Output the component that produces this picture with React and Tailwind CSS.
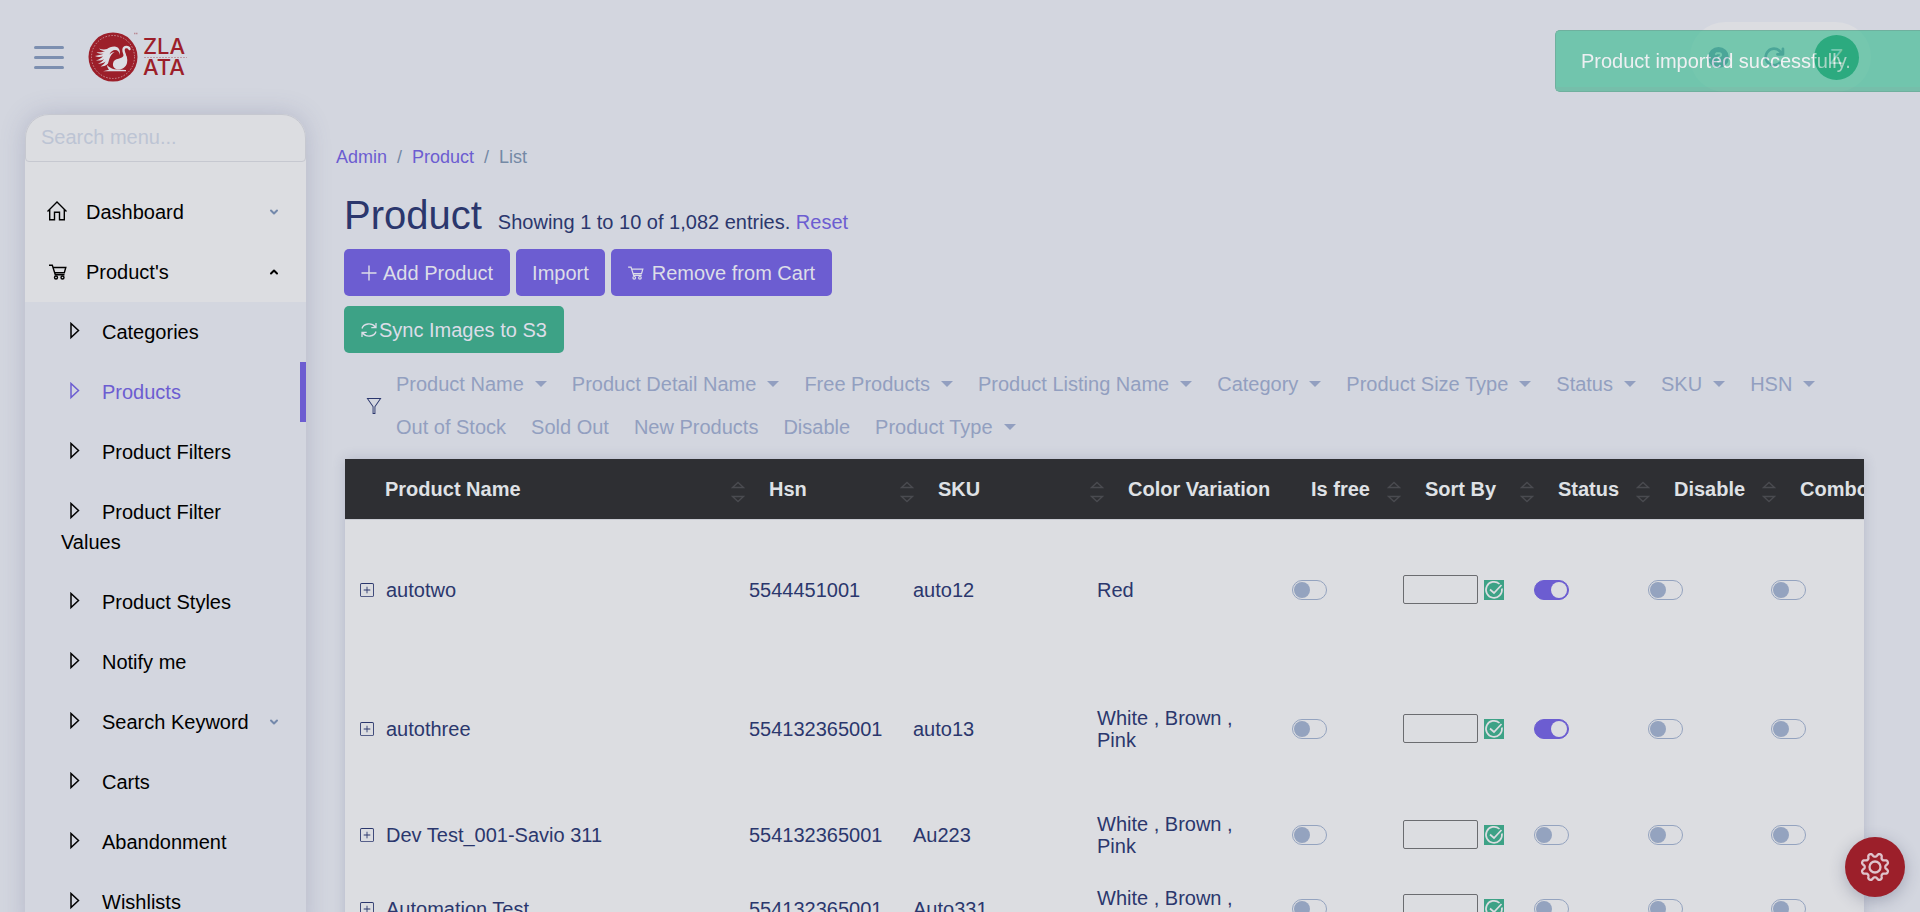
import React from "react";
import { TfiFilter } from "react-icons/tfi";
import { BsPlusSquare } from "react-icons/bs";
import { FaCircleQuestion, FaArrowRotateRight } from "react-icons/fa6";
import { ChevronDown, ChevronUp } from "lucide-react";

const subItems = [
  { label: "Categories" },
  { label: "Products", active: true },
  { label: "Product Filters" },
  { label: "Product Filter Values" },
  { label: "Product Styles" },
  { label: "Notify me" },
  { label: "Search Keyword", more: true },
  { label: "Carts" },
  { label: "Abandonment" },
  { label: "Wishlists" },
];

const filters = [
  ["Product Name", true],
  ["Product Detail Name", true],
  ["Free Products", true],
  ["Product Listing Name", true],
  ["Category", true],
  ["Product Size Type", true],
  ["Status", true],
  ["SKU", true],
  ["HSN", true],
  ["Out of Stock", false],
  ["Sold Out", false],
  ["New Products", false],
  ["Disable", false],
  ["Product Type", true],
];

const headCols = [
  ["Product Name", true],
  ["Hsn", true],
  ["SKU", true],
  ["Color Variation", false],
  ["Is free", true],
  ["Sort By", true],
  ["Status", true],
  ["Disable", true],
  ["Combo", true],
];

const rows = [
  { name: "autotwo", hsn: "5544451001", sku: "auto12", color: "Red", status: true, height: "h-[140px]" },
  { name: "autothree", hsn: "554132365001", sku: "auto13", color: "White , Brown , Pink", status: true, height: "h-[138px]" },
  { name: "Dev Test_001-Savio 311", hsn: "554132365001", sku: "Au223", color: "White , Brown , Pink", status: false, height: "h-[74px]" },
  { name: "Automation Test", hsn: "554132365001", sku: "Auto331", color: "White , Brown , Pink", status: false, height: "h-[74px]" },
];

function Logo() {
  return (
    <svg width="102" height="54" viewBox="0 0 102 54" role="img" aria-label="Zlaata">
      <circle cx="25" cy="27" r="24.500" fill="#9c1f2a" />
      <circle cx="25" cy="27" r="21.500" fill="none" stroke="#cfa8af" strokeWidth="0.800" strokeDasharray="1.500 1.500" />
      <path
        fill="none"
        stroke="#dcdde4"
        strokeWidth="2.400"
        strokeLinecap="round"
        d="M41.500 19c-.8-2.500-5.500-3-6 .5-.3 3 2.500 6 2 11"
      />
      <path fill="#dcdde4" d="M36.500 22c2 3.500 3.500 7 2.500 11-1 4-4.500 6.500-8.500 6.500-3.500 0-6-2.500-5.500-6 .4-3 2.500-4 5.500-4.700 4-1 6-3 6-6.800z" />
      <path
        fill="#dcdde4"
        d="M32 25c.5-5-1.500-8.500-5.500-8.500-3.500 0-5.500 1-7.500 2.500-3 .8-5.500.3-8-.5 1.500 2 4 2.500 6 2.500-3 1.500-5.500 1.500-8.500 1 2 1.800 4.500 2 7 1.800C13 25 10 25.500 7 26c2.500 1.500 5.500 1 8 .5-2 2-4 3-7 3.800 3 .8 6 0 8-1.300-1.500 2-3 3.500-6 4.700 3 .3 5.500-.7 7.500-2.200-1 2-2.500 3.500-5 5 3.500 0 6-1 7.500-3l1.500-5c1-3 2.500-5 5-6.500-2 0-3.500 1-5 2.500 1-3 3.500-4.500 5.500-4.500 3 0 4.500 2 5 5z"
      />
      <path fill="#dcdde4" d="M19 35c2 2 4 3.500 7 4.200l12 .8v1.200H15l6-1.500c-1-1.200-1.800-2.700-2-4.700z" />
      <text x="55" y="24" fontSize="22" fontWeight="500" fill="#9c1f2a" fontFamily="Inter, sans-serif">ZLA</text>
      <text x="55" y="45" fontSize="22" fontWeight="500" fill="#9c1f2a" fontFamily="Inter, sans-serif">ATA</text>
      <path d="M56 27.500h43" stroke="#b98b95" strokeWidth="0.800" strokeDasharray="2 1" />
      <path d="M46 3.500h4" stroke="#b98b95" strokeWidth="1.500" strokeDasharray="1.500 0.500" />
    </svg>
  );
}

const gearPath = (() => {
  const points = [];
  for (let i = 0; i < 144; i += 1) {
    const angle = (i / 144) * Math.PI * 2;
    const wave = Math.tanh(-1.6 * Math.cos(8 * angle)) / Math.tanh(1.6);
    const radius = 12 + 1.7 * wave;
    points.push(`${(16 + radius * Math.cos(angle)).toFixed(2)} ${(16 + radius * Math.sin(angle)).toFixed(2)}`);
  }
  return `M${points.join("L")}Z`;
})();

function Gear() {
  return (
    <svg width="32" height="32" viewBox="0 0 32 32" fill="none" stroke="#dfc3cb" strokeWidth="2.300" strokeLinejoin="round" aria-hidden="true">
      <path d={gearPath} />
      <circle cx="16" cy="16" r="5.500" />
    </svg>
  );
}

function HomeIcon() {
  return (
    <svg width="20" height="22" viewBox="0 0 20 22" fill="none" stroke="currentColor" strokeWidth="1.400" aria-hidden="true">
      <path d="M.5 10.500 10 1l9.500 9.500M2.700 8.500v10.300h4.800v-7.500h5v7.500h4.800V8.500" />
    </svg>
  );
}

function CartIcon({ className }) {
  return (
    <svg viewBox="0 0 18 16" fill="none" stroke="currentColor" strokeWidth="1.400" className={className} aria-hidden="true">
      <path d="M0 1.200h3.300l3 9.600h9.200M4.200 3.500h12.600l-1.500 5.300H6" />
      <circle cx="7" cy="13.500" r="1.500" />
      <circle cx="13.500" cy="13.500" r="1.500" />
    </svg>
  );
}

function ReloadIcon() {
  return (
    <svg width="16" height="16" viewBox="0 0 16 16" fill="none" stroke="currentColor" strokeWidth="1.300" aria-hidden="true">
      <path d="M1 6.500C2.500 1 11 .5 14.300 5M15 1v4.700h-4.700M15 9.500c-1.500 5.500-10 6-13.300 1.500M1 15v-4.700h4.700" />
    </svg>
  );
}

function PlusIcon() {
  return (
    <svg width="16" height="16" viewBox="0 0 16 16" stroke="currentColor" strokeWidth="1.400" aria-hidden="true">
      <path d="M8 .5v15M.5 8h15" />
    </svg>
  );
}

function PlayIcon() {
  return (
    <svg width="10" height="18" viewBox="0 0 10 18" fill="none" stroke="currentColor" strokeWidth="1.500" className="mr-[22px] ml-[9px] inline align-[-1px]" aria-hidden="true">
      <path d="M1 1.500v14l7.500-7z" />
    </svg>
  );
}

function CheckIcon() {
  return (
    <svg width="20" height="20" viewBox="0 0 20 20" fill="none" stroke="currentColor" strokeWidth="1.700" aria-hidden="true">
      <path d="M15.500 4A8 8 0 1 0 17.900 8.500M6 9.500l4 3.500 7.500-8" />
    </svg>
  );
}

function Caret() {
  return (
    <svg width="12" height="6" viewBox="0 0 12 6" fill="currentColor" aria-hidden="true">
      <path d="M0 0h12L6 6z" />
    </svg>
  );
}

function SortIcon() {
  return (
    <svg width="14" height="22" viewBox="0 0 14 22" fill="none" stroke="#4a4b50" strokeWidth="1.300" className="mt-[5px]" aria-hidden="true">
      <path d="M1.500 6.500h11L7 1.500zM1.500 15.500h11L7 20.500z" />
    </svg>
  );
}

function Toggle({ label, checked }) {
  return (
    <input
      type="checkbox"
      role="switch"
      aria-label={label}
      defaultChecked={checked}
      className="block h-5 w-[35px] appearance-none rounded-full border border-[#94a3bf] before:mt-[1px] before:ml-[1px] before:block before:size-4 before:rounded-full before:bg-[#94a3bf] checked:border-[#6c5dd1] checked:bg-[#6c5dd1] checked:before:ml-4 checked:before:bg-[#dcdde1]"
    />
  );
}

function Sidebar() {
  return (
    <aside className="w-[281px] shrink-0 self-start rounded-t-[24px] bg-[#dcdde1] shadow-[0_0_24px_rgba(90,95,140,0.25)]">
      <input
        type="search"
        aria-label="Search menu"
        placeholder="Search menu..."
        className="block h-12 w-full rounded-t-[24px] rounded-b-[4px] border border-[#c6c8d0] px-[15px] pb-[2px] text-[20px] outline-none placeholder:text-[#bcc4d4]"
      />
      <nav className="mt-5 text-black">
        <a href="#dashboard" className="flex h-[60px] items-center pr-[26px] pl-[22px]">
          <HomeIcon />
          <span className="flex-1 pl-[19px]">Dashboard</span>
          <ChevronDown className="size-[12px] text-[#7489ab]" strokeWidth={4} />
        </a>
        <a href="#products" className="flex h-[60px] items-center pr-[26px] pl-6">
          <CartIcon className="h-4 w-[18px]" />
          <span className="flex-1 pl-[19px]">Product's</span>
          <ChevronUp className="size-[12px]" strokeWidth={4} />
        </a>
        <ul className="bg-[#d3d6df]">
          {subItems.map((item) => (
            <li key={item.label}>
              <a
                href={`#${item.label.toLowerCase().replaceAll(" ", "-")}`}
                className={`flex items-center border-r-[6px] py-[15px] pr-5 pl-9 ${item.active ? "border-[#6c5dd1] text-[#6c5dd1]" : "border-transparent"}`}
              >
                <span className="flex-1 leading-[30px]">
                  <PlayIcon />
                  {item.label}
                </span>
                {item.more && <ChevronDown className="size-[12px] text-[#7489ab]" strokeWidth={4} />}
              </a>
            </li>
          ))}
        </ul>
      </nav>
    </aside>
  );
}

function ProductTable() {
  return (
    <section className="mt-[17px] ml-[9px] shadow-[0_0_12px_rgba(60,70,110,0.2)]">
      <div className="overflow-x-auto bg-[#dcdde1] [scrollbar-width:none]">
        <table className="w-[1584px] table-fixed border-collapse bg-[#2e2f33] text-left text-[#dfe1e5]">
          <colgroup>
            <col className="w-[408px]" />
            <col className="w-[169px]" />
            <col className="w-[190px]" />
            <col className="w-[183px]" />
            <col className="w-[114px]" />
            <col className="w-[133px]" />
            <col className="w-[116px]" />
            <col className="w-[126px]" />
            <col />
          </colgroup>
          <thead>
            <tr>
              {headCols.map(([label, sortable]) => (
                <th key={label} className="h-[60px] pr-2 pl-4 first:pl-10">
                  <div className="flex items-center justify-between whitespace-nowrap">
                    <span>{label}</span>
                    {sortable && <SortIcon />}
                  </div>
                </th>
              ))}
            </tr>
          </thead>
        </table>
        <table className="w-[1584px] table-fixed border-collapse border-t border-[#c9cbd2] leading-[22px] text-[#2b376d]">
          <colgroup>
            <col className="w-[388px]" />
            <col className="w-[164px]" />
            <col className="w-[184px]" />
            <col className="w-[195px]" />
            <col className="w-[111px]" />
            <col className="w-[131px]" />
            <col className="w-[114px]" />
            <col className="w-[123px]" />
            <col />
          </colgroup>
          <tbody>
            {rows.map((row) => (
              <tr key={row.name} className={row.height}>
                <td className="pl-[15px]">
                  <div className="flex items-center gap-3">
                    <button type="button" aria-label={`Expand ${row.name}`}>
                      <BsPlusSquare className="size-[14px]" />
                    </button>
                    {row.name}
                  </div>
                </td>
                <td className="pl-4">{row.hsn}</td>
                <td className="pl-4">{row.sku}</td>
                <td className="pr-8 pl-4">{row.color}</td>
                <td className="pl-4"><Toggle label={`${row.name} is free`} /></td>
                <td className="pl-4">
                  <div className="flex items-center gap-[6px]">
                    <input type="text" aria-label={`${row.name} sort order`} className="h-[29px] w-[75px] rounded-[2px] border border-[#6b6c70]" />
                    <button type="button" aria-label={`Save sort order of ${row.name}`} className="size-5 bg-[#3da286] text-[#dcdde1]">
                      <CheckIcon />
                    </button>
                  </div>
                </td>
                <td className="pl-4"><Toggle label={`${row.name} status`} checked={row.status} /></td>
                <td className="pl-4"><Toggle label={`${row.name} disable`} /></td>
                <td className="pl-4"><Toggle label={`${row.name} combo`} /></td>
              </tr>
            ))}
          </tbody>
        </table>
      </div>
    </section>
  );
}

export default function App() {
  return (
    <div className="h-screen overflow-x-hidden overflow-y-auto bg-[#d3d6df] font-['Liberation_Sans',Arial,sans-serif] text-[20px] leading-[30px] text-[#2b376d] [scrollbar-width:none]">
      <header className="flex h-[114px] items-center pr-[49px] pl-[34px]">
        <button type="button" aria-label="Toggle menu" className="flex w-[30px] flex-col gap-[7px]">
          <span className="h-[3px] rounded bg-[#7c8fb0]" />
          <span className="h-[3px] rounded bg-[#7c8fb0]" />
          <span className="h-[3px] rounded bg-[#7c8fb0]" />
        </button>
        <a href="#home" className="ml-6">
          <Logo />
        </a>
        <div className="ml-auto flex h-[70px] items-center rounded-full bg-[#dcdde1] pr-3 pl-[18px] text-[#7489ab]">
          <button type="button" aria-label="Help"><FaCircleQuestion className="size-[21px]" /></button>
          <button type="button" aria-label="Refresh" className="ml-[34px]"><FaArrowRotateRight className="size-[22px]" /></button>
          <button type="button" aria-label="Account" className="ml-[29px] size-[45px] rounded-full bg-[#27946c] text-[22px] text-[#dcdde1]">Z</button>
        </div>
      </header>

      <div role="status" className="fixed top-[30px] right-0 flex h-[62px] w-[365px] items-center overflow-hidden rounded-l-[5px] border border-r-0 border-[#2d9673] bg-[#31ba8c] pl-[25px] text-white opacity-60">
        Product imported successfully.
        <span className="absolute inset-x-0 bottom-0 h-1 bg-[#39ae87]" />
      </div>

      <div className="flex pr-14 pl-[25px]">
        <Sidebar />
        <main className="min-w-0 flex-1 pl-[30px]">
          <nav aria-label="Breadcrumb" className="mt-7 flex gap-[10px] text-[18px] text-[#7489a5]">
            <a href="#admin" className="text-[#6c5dd1]">Admin</a>
            <span>/</span>
            <a href="#product" className="text-[#6c5dd1]">Product</a>
            <span>/</span>
            <span>List</span>
          </nav>
          <div className="pl-2">
            <div className="mt-[19px] flex items-baseline gap-4">
              <h1 className="text-[40px] leading-[48px]">Product</h1>
              <p>Showing 1 to 10 of 1,082 entries. <a href="#reset" className="text-[#6c5dd1]">Reset</a></p>
            </div>
            <div className="mt-[10px] flex gap-[6px] text-[#dcdde8]">
              <button type="button" className="flex h-[47px] items-center gap-[6px] rounded-[5px] bg-[#6c5dd1] px-[17px]"><PlusIcon />Add Product</button>
              <button type="button" className="h-[47px] rounded-[5px] bg-[#6c5dd1] px-4">Import</button>
              <button type="button" className="flex h-[47px] items-center gap-2 rounded-[5px] bg-[#6c5dd1] px-[17px]"><CartIcon className="h-[14px] w-4" />Remove from Cart</button>
            </div>
            <button type="button" className="mt-[10px] flex h-[47px] items-center gap-[2px] rounded-[5px] bg-[#3da286] px-[17px] text-[#dcdde8]"><ReloadIcon />Sync Images to S3</button>
            <div className="mt-4 flex items-center text-[#929fc0]">
              <TfiFilter className="ml-[22px] size-4 shrink-0 text-[#2b376d]" />
              <div className="ml-[14px] flex flex-wrap gap-x-[25px] gap-y-[13px]">
                {filters.map(([label, menu]) => (
                  <button key={label} type="button" className="flex items-center gap-[11px]">
                    {label}
                    {menu && <Caret />}
                  </button>
                ))}
              </div>
            </div>
          </div>
          <ProductTable />
        </main>
      </div>

      <button type="button" aria-label="Settings" className="fixed right-[15px] bottom-[15px] flex size-[60px] items-center justify-center rounded-full bg-[#9c1f2a] shadow-[0_4px_16px_rgba(50,55,90,0.3)]">
        <Gear />
      </button>
    </div>
  );
}
